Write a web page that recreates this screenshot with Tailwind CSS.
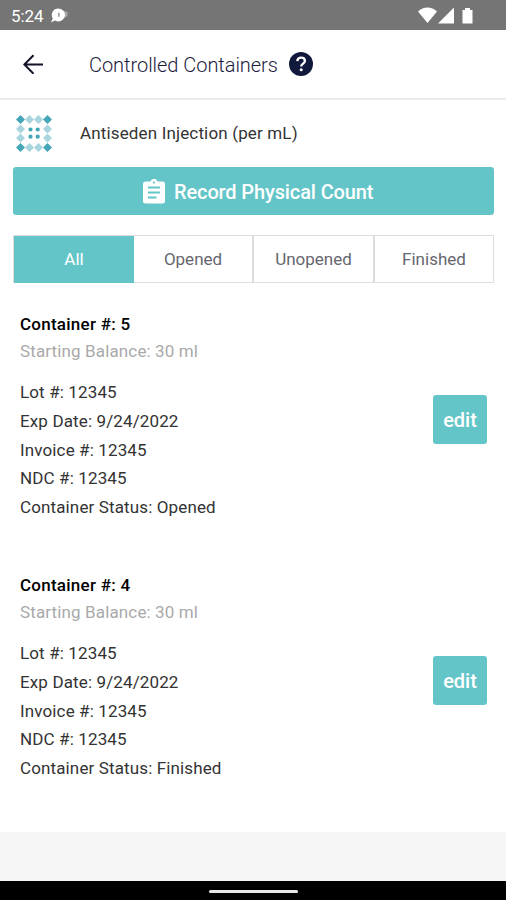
<!DOCTYPE html>
<html lang="en">
<head>
<meta charset="utf-8">
<title>Controlled Containers</title>
<script src="https://cdn.jsdelivr.net/npm/@tailwindcss/browser@4"></script>
</head>
<body class="w-[506px] h-[900px] overflow-hidden bg-white flex flex-col font-['Roboto',sans-serif] text-[#333]">
  <div class="h-[30px] shrink-0 bg-[#757575] flex items-center pl-[11px] pr-[33px] text-white">
    <span class="text-[17px] leading-[30px] tracking-[-0.1px] pt-[2px]">5:24</span>
    <svg class="ml-[7px] mt-[1px] w-[18px] h-[16px]" viewBox="0 0 18 16"><path d="M14 3l3.500 1v4l-3 2z" fill="#a8a8a8"/><path d="M8.500 .5a6.500 6.500 0 1 1-3.500 12L1 14.500l1.800-4A6.500 6.500 0 0 1 8.500 .5z" fill="#fff"/><path d="M8.800 4.800v4" stroke="#999" stroke-width="1.600"/></svg>
    <svg class="ml-auto w-[55px] h-[18px]" viewBox="0 0 55 18" fill="#fff"><path d="M0 5.500C5.500 .2 13.500 .2 19 5.500L9.500 17z"/><path d="M36 1.500V17.500H20z"/><path d="M44.500 4h2.500V2h5v2h2.500v13.500h-10z"/></svg>
  </div>
  <header class="h-[70px] shrink-0 border-b-2 border-[#ebebeb] flex items-center pl-[23px] text-[#1b1b3d]">
    <svg class="w-[20px] h-[20px]" viewBox="0 0 20 20" fill="none" stroke="#111128" stroke-width="2"><path d="M20 10.500H1.500M10.500 1.300L1.300 10.500l9.200 9.200"/></svg>
    <h1 class="ml-[46px] text-[20px] font-light tracking-[-0.04px] whitespace-nowrap pt-[2px]">Controlled Containers</h1>
    <svg class="ml-[11px] w-[24px] h-[24px]" viewBox="0 0 24 24"><circle cx="12" cy="12" r="12" fill="#111a3c"/><path d="M8.300 9.100C8.500 6.700 10 5.600 12.100 5.600c2.200 0 3.800 1.300 3.800 3.300 0 2.600-3.700 2.800-3.700 5.600" fill="none" stroke="#fff" stroke-width="2.300"/><circle cx="12.200" cy="17.700" r="1.500" fill="#fff"/></svg>
  </header>
  <section class="h-[67px] shrink-0 flex items-center pl-[16px]">
    <svg class="w-[36px] h-[37px]" viewBox="0 0 36 37">
      <g fill="#a9d5df"><path d="M13.500 0l4.500 4.500-4.500 4.500L9 4.500zM22.500 0L27 4.500 22.500 9 18 4.500zM13.500 28l4.500 4.500-4.500 4.500L9 32.500zM22.500 28l4.500 4.500-4.500 4.500-4.500-4.500zM4.500 9.500L9 14l-4.500 4.500L0 14zM4.500 18.500L9 23l-4.500 4.500L0 23zM31.500 9.500L36 14l-4.500 4.500L27 14zM31.500 18.500L36 23l-4.500 4.500L27 23z"/></g>
      <g fill="#45a6b7"><path d="M4.500 0L9 4.500 4.500 9 0 4.500zM31.500 0L36 4.500 31.500 9 27 4.500zM4.500 28L9 32.500 4.500 37 0 32.500zM31.500 28l4.500 4.500-4.500 4.500-4.500-4.500z"/><circle cx="14.500" cy="14.500" r="2.100"/><circle cx="21.700" cy="14.500" r="2.100"/><circle cx="14.500" cy="21.700" r="2.100"/><circle cx="21.700" cy="21.700" r="2.100"/></g>
    </svg>
    <span class="ml-[28px] text-[17px] tracking-[0.15px] whitespace-nowrap">Antiseden Injection (per mL)</span>
  </section>
  <button class="mx-[13px] w-[481px] h-[48px] shrink-0 rounded-[3px] bg-[#64c5c8] text-white flex items-center pl-[130px]">
    <svg class="w-[22px] h-[25px]" viewBox="0 0 22 25"><path d="M2.500 2.600h5a3.600 3.600 0 0 1 7 0h5A2.500 2.500 0 0 1 22 5.100v17A2.500 2.500 0 0 1 19.500 24.600h-17A2.500 2.500 0 0 1 0 22.100v-17A2.500 2.500 0 0 1 2.500 2.600z" fill="#fff"/><circle cx="11" cy="3.600" r="1.100" fill="#64c5c8"/><path d="M5 8.600h12M5 13.500h12M5 18.400h8.500" stroke="#64c5c8" stroke-width="2"/></svg>
    <span class="ml-[9px] pt-[1px] text-[20px] font-medium tracking-[-0.12px] whitespace-nowrap">Record Physical Count</span>
  </button>
  <nav class="mt-[20px] mx-[13px] w-[481px] h-[48px] shrink-0 grid grid-cols-[120px_120px_121px_118px] border border-[#dedede] text-[17px] text-[#66666e] text-center leading-[47px]">
    <div class="bg-[#64c5c8] text-white">All</div>
    <div class="border-r-2 border-[#dcdcdc]">Opened</div>
    <div class="border-r-2 border-[#dcdcdc]">Unopened</div>
    <div>Finished</div>
  </nav>
  <main class="h-[549px] shrink-0 pt-[27px]">
    <article class="h-[261px] pl-[20px] pr-[19px] flex justify-between text-[17px] leading-[28.750px] tracking-[0.130px] whitespace-nowrap">
      <div>
        <h2 class="font-medium text-black leading-[28px] tracking-[0.25px]">Container #: 5</h2>
        <p class="text-[#a9a9a9] leading-[27px] mb-[13px]">Starting Balance: 30 ml</p>
        <p>Lot #: 12345</p>
        <p>Exp Date: 9/24/2022</p>
        <p>Invoice #: 12345</p>
        <p>NDC #: 12345</p>
        <p>Container Status: Opened</p>
      </div>
      <button class="mt-[85px] w-[54px] h-[49px] rounded-[3px] bg-[#64c5c8] text-white font-medium text-[20px] tracking-normal pt-[1px]">edit</button>
    </article>
    <article class="h-[261px] pl-[20px] pr-[19px] flex justify-between text-[17px] leading-[28.750px] tracking-[0.130px] whitespace-nowrap">
      <div>
        <h2 class="font-medium text-black leading-[28px] tracking-[0.25px]">Container #: 4</h2>
        <p class="text-[#a9a9a9] leading-[27px] mb-[13px]">Starting Balance: 30 ml</p>
        <p>Lot #: 12345</p>
        <p>Exp Date: 9/24/2022</p>
        <p>Invoice #: 12345</p>
        <p>NDC #: 12345</p>
        <p>Container Status: Finished</p>
      </div>
      <button class="mt-[85px] w-[54px] h-[49px] rounded-[3px] bg-[#64c5c8] text-white font-medium text-[20px] tracking-normal pt-[1px]">edit</button>
    </article>
  </main>
  <div class="h-[49px] shrink-0 bg-[#f6f6f6]"></div>
  <footer class="h-[19px] shrink-0 bg-black flex justify-center pt-[9px]"><div class="w-[89px] h-[3px] rounded-full bg-[#e8e8e8]"></div></footer>
</body>
</html>
